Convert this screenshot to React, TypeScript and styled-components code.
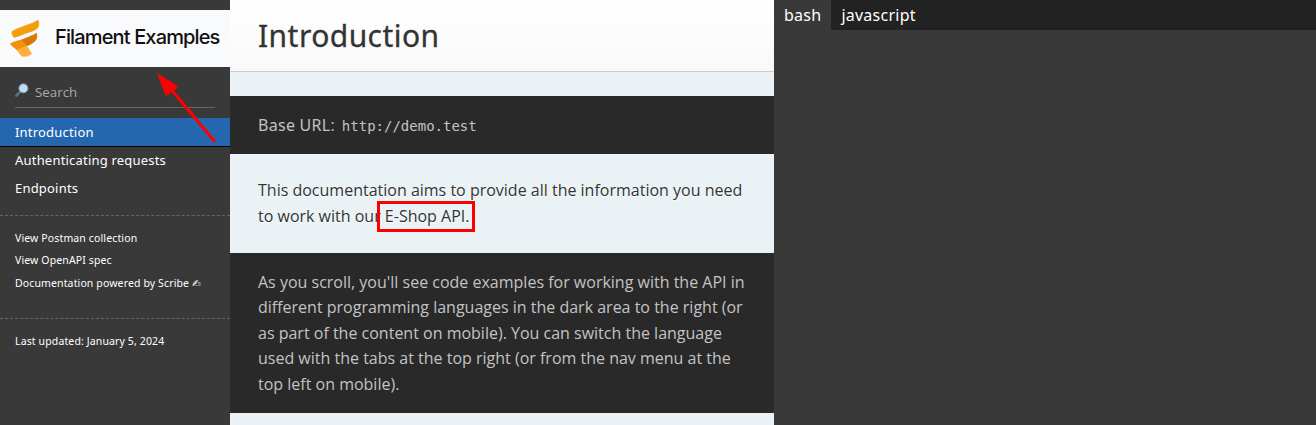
import React from "react";
import styled, { createGlobalStyle, css } from "styled-components";

const GlobalStyle = createGlobalStyle`
  * { box-sizing: border-box; }
  html, body { margin: 0; padding: 0; }
  body {
    background: #393939;
    font-family: "Open Sans", sans-serif;
    overflow: hidden;
  }
`;

const noto = '"Noto Sans", "DejaVu Sans", sans-serif';

const Page = styled.div`
  position: relative;
  display: grid;
  grid-template-columns: 230px 544px 1fr;
  height: 425px;
  overflow: hidden;
`;

const Sidebar = styled.nav`
  background: #393939;
  color: #fff;
  padding-top: 10px;
`;

const Brand = styled.div`
  display: flex;
  align-items: center;
  height: 57px;
  background: #f9fafc;
`;

const LogoMark = styled.svg`
  display: block;
  width: 32px;
  height: 40px;
  margin: 0 14px 0 9px;
  flex: none;
`;

const BrandName = styled.span`
  color: #111;
  font: 500 20px/54px Inter, sans-serif;
  letter-spacing: -0.86px;
  white-space: nowrap;
  padding-bottom: 3px;
`;

const SearchBox = styled.div`
  display: flex;
  align-items: center;
  height: 31px;
  margin: 10px 15px;
  border-bottom: 1px solid #666;
  color: #a9a9a9;
  font-size: 13.33px;
`;

const SearchIcon = styled.svg`
  width: 14px;
  height: 14px;
  margin: 0 6px 5px 0;
`;

const NavItem = styled.a<{ $active?: boolean }>`
  display: block;
  height: 28px;
  padding: 0 15px;
  font-family: ${noto};
  font-size: 13px;
  line-height: 28px;
  letter-spacing: 0.2px;
  ${(p) =>
    p.$active &&
    css`
      height: 29px;
      background: #2467af;
      border-bottom: 1px solid #000;
      margin-bottom: -1px;
    `}
`;

const FooterList = styled.ul<{ $gap: number }>`
  list-style: none;
  margin: ${(p) => p.$gap}px 0 0;
  padding: 11px 15px 0;
  border-top: 1px dashed #666;
  font-family: ${noto};
  font-size: 10.5px;
  line-height: 22.4px;
  letter-spacing: 0.13px;
`;

const Content = styled.main`
  background: #eaf2f6;
  color: #333;
  font-size: 16px;
  line-height: 25.6px;
`;

const Heading = styled.h1`
  height: 72px;
  margin: 0 0 24.4px;
  padding: 0 28px;
  background: linear-gradient(#fff, #f9f9f9);
  border-bottom: 1px solid #ccc;
  font-family: ${noto};
  font-size: 30px;
  line-height: 72px;
  font-weight: 400;
  letter-spacing: 0.45px;
  -webkit-text-stroke: 0.3px #333;
`;

const Notice = styled.aside`
  padding: 16.4px 28px 15.6px;
  background: #292929;
  color: #c3c3c3;
`;

const Strong = styled.strong`
  font-family: ${noto};
  font-weight: 400;
  letter-spacing: 0.28px;
  line-height: 1;
`;

const Code = styled.code`
  margin-left: 3px;
  font: 14px "DejaVu Sans Mono", monospace;
`;

const Intro = styled.p`
  margin: 0;
  padding: 24px 28px;
  text-shadow: 0 1px 0 #fff;
`;

const Highlighted = styled.span`
  position: relative;
`;

const HighlightFrame = styled.i`
  position: absolute;
  left: -8px;
  right: -6px;
  top: -4px;
  height: 31px;
  border: 3px solid #f00;
`;

const Examples = styled.section`
  background: #393939;
`;

const Tabs = styled.div`
  display: flex;
  height: 30px;
  background: #222;
`;

const Tab = styled.a<{ $active?: boolean }>`
  padding: 0 10px;
  background: ${(p) => (p.$active ? "#393939" : "transparent")};
  color: #fff;
  font-family: ${noto};
  font-size: 16px;
  letter-spacing: 0.25px;
  line-height: 30px;
`;

const Arrow = styled.svg`
  position: absolute;
  left: 150px;
  top: 68px;
  width: 72px;
  height: 80px;
`;

export default function App() {
  return (
    <Page>
      <GlobalStyle />
      <Sidebar>
        <Brand>
          <LogoMark viewBox="0 0 32 40">
            <path fill="#f59e0b" stroke="#f59e0b" strokeWidth="0.8" d="M4.500 18Q2.500 15 3 12.500L9 9.500L20 5.500Q25 4 29 1.300Q31 6.500 28 9.500Q25 12 19 13.500L8 17.500Q6 18.500 4.500 18Z" />
            <path fill="#d97706" stroke="#d97706" strokeWidth="0.8" d="M12.500 21L21 17.500Q25 16 27.500 14.200Q29 18.500 26 22Q23 25 17.500 27Z" />
            <path fill="#fbb040" stroke="#fbb040" strokeWidth="0.6" d="M7.500 30.500L17.500 26.500L22.700 34.800Q19 38 14.300 37.500Q12 37 10.500 34.500Z" />
            <path fill="#f0920c" d="M0.800 24.800Q4 22.700 8 21.700L12.700 20.500L17.800 26.800L7.700 31Q4 28.500 0.800 24.800Z" />
          </LogoMark>
          <BrandName>Filament Examples</BrandName>
        </Brand>
        <SearchBox>
          <SearchIcon viewBox="0 0 14 14">
            <path d="M1.300 12.700L5.500 8.500" stroke="#607584" strokeWidth="2.400" strokeLinecap="round" />
            <circle cx="8.400" cy="5.300" r="4.500" fill="#bddef5" stroke="#8296a3" strokeWidth="1" />
          </SearchIcon>
          Search
        </SearchBox>
        <NavItem $active>Introduction</NavItem>
        <NavItem>Authenticating requests</NavItem>
        <NavItem>Endpoints</NavItem>
        <FooterList $gap={13}>
          <li>View Postman collection</li>
          <li>View OpenAPI spec</li>
          <li>Documentation powered by Scribe ✍&#xFE0E;</li>
        </FooterList>
        <FooterList $gap={23.6}>
          <li>Last updated: January 5, 2024</li>
        </FooterList>
      </Sidebar>
      <Content>
        <Heading>Introduction</Heading>
        <Notice>
          <Strong>Base URL</Strong>: <Code>http://demo.test</Code>
        </Notice>
        <Intro>
          This documentation aims to provide all the information you need to work with our{" "}
          <Highlighted>
            E-Shop API.
            <HighlightFrame />
          </Highlighted>
        </Intro>
        <Notice>
          As you scroll, you'll see code examples for working with the API in different programming
          languages in the dark area to the right (or as part of the content on mobile). You can
          switch the language used with the tabs at the top right (or from the nav menu at the top
          left on mobile).
        </Notice>
      </Content>
      <Examples>
        <Tabs>
          <Tab $active>bash</Tab>
          <Tab>javascript</Tab>
        </Tabs>
      </Examples>
      <Arrow viewBox="150 68 72 80">
        <path d="M215 142L170 88" stroke="#f00" strokeWidth="3" />
        <path d="M157 73L178.500 86.500L166 96.500Z" fill="#f00" />
      </Arrow>
    </Page>
  );
}
